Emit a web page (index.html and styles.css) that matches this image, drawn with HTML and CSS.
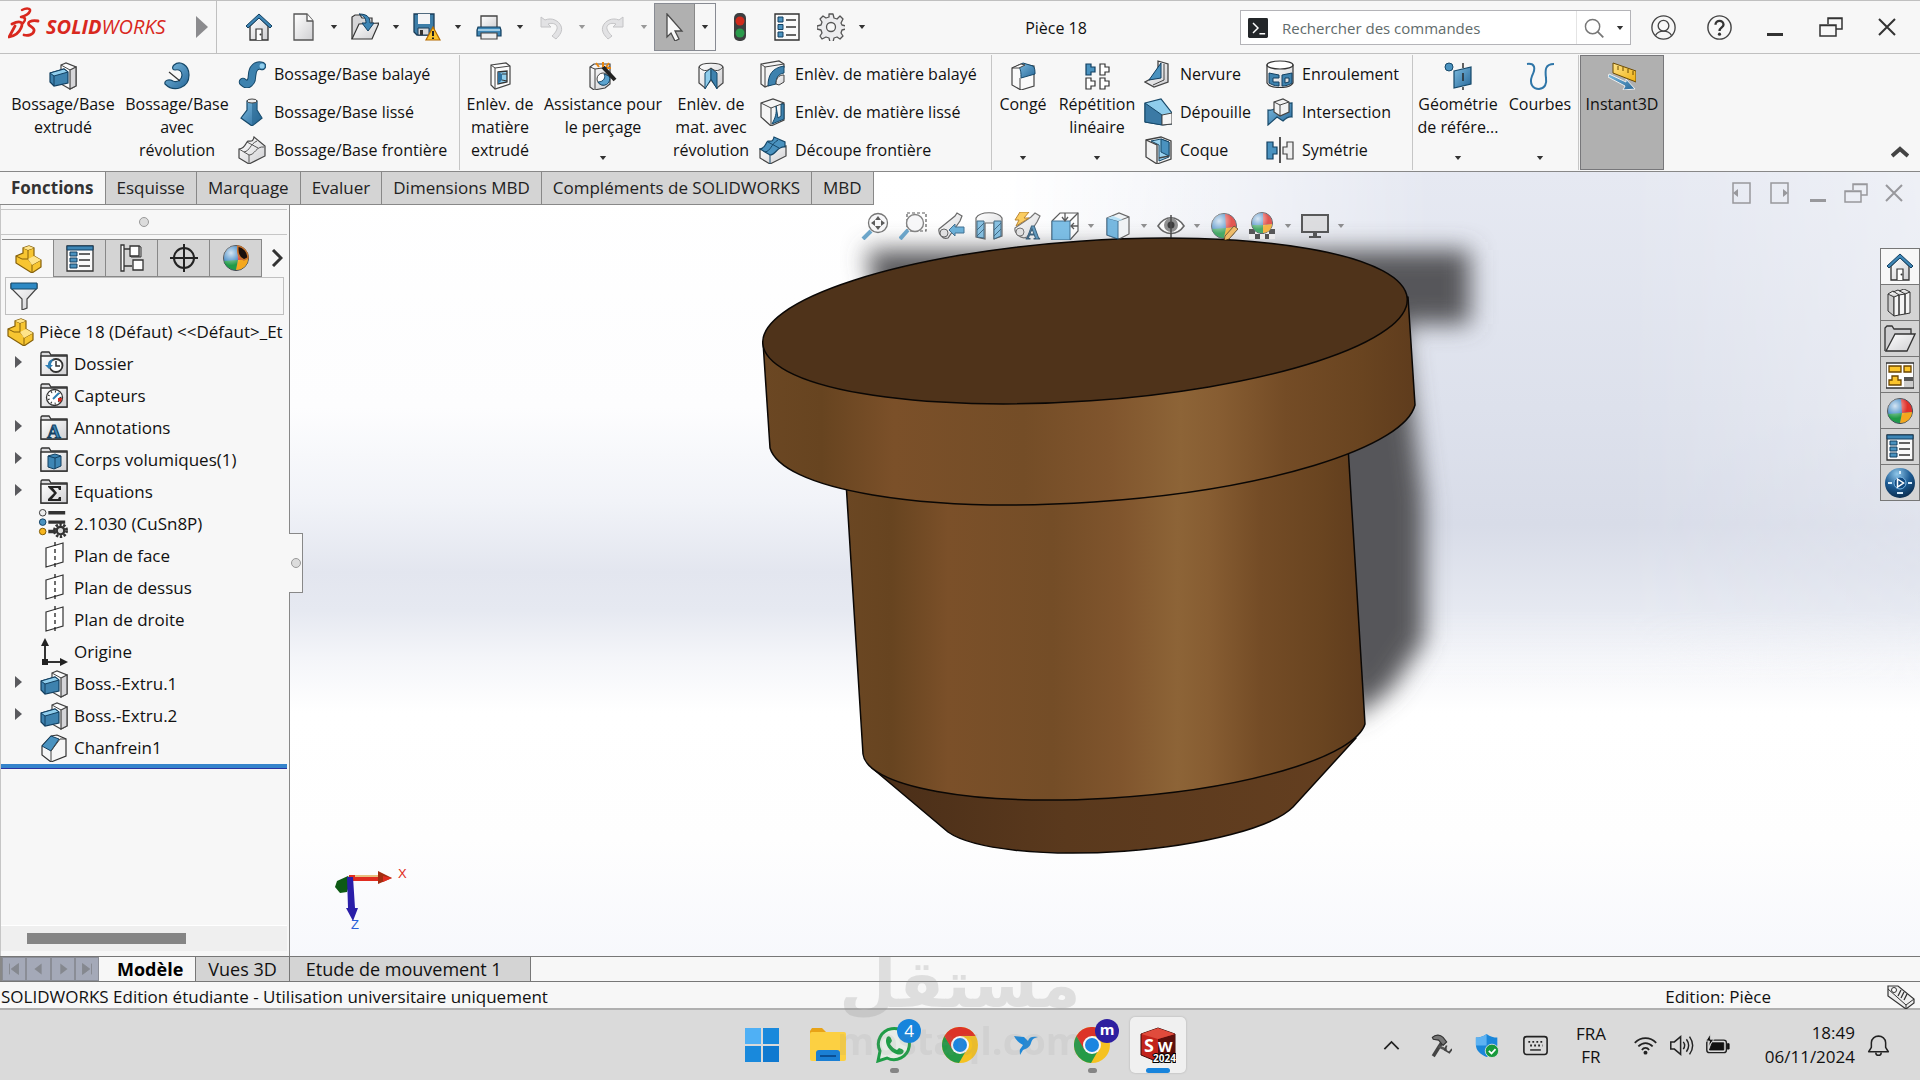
FILE: index.html
```html
<!DOCTYPE html>
<html lang="fr">
<head>
    <meta charset="UTF-8">
    <meta name="viewport" content="width=device-width, initial-scale=1.0">
    <title>SOLIDWORKS - Pièce 18</title>
    <link rel="stylesheet" href="styles.css">
</head>
<body>
    <!-- Icon sprite -->
    <svg class="sprite" aria-hidden="true">
        <defs>
            <linearGradient id="gBlue" x1="0" y1="0" x2="1" y2="1"><stop offset="0" stop-color="#7dbce0"/><stop offset="1" stop-color="#27689a"/></linearGradient>
            <linearGradient id="gGray" x1="0" y1="0" x2="1" y2="1"><stop offset="0" stop-color="#fff"/><stop offset="1" stop-color="#cfcfd2"/></linearGradient>
            <linearGradient id="gGold" x1="0" y1="0" x2="1" y2="1"><stop offset="0" stop-color="#ffe48a"/><stop offset="1" stop-color="#f0b010"/></linearGradient>
            <radialGradient id="gNavy" cx=".4" cy=".2" r=".9"><stop offset="0" stop-color="#8fc7ea"/><stop offset=".5" stop-color="#1c5a92"/><stop offset="1" stop-color="#08233f"/></radialGradient>
            <radialGradient id="gShine" cx=".3" cy=".3" r=".5"><stop offset="0" stop-color="#fff" stop-opacity=".8"/><stop offset="1" stop-color="#fff" stop-opacity="0"/></radialGradient>
        </defs>
        <symbol id="caret" viewBox="0 0 8 5"><path d="M0 0h8L4 5z" fill="currentColor"/></symbol>
        <symbol id="ds" viewBox="0 0 32 32"><g fill="none" stroke="#d9281e" stroke-linecap="round" stroke-linejoin="round"><path d="M14 3c4-2 9-2 8 1-1 3-5 5-9 6 5 0 5 3 2 6" stroke-width="2.500"/><path d="M4 17c8-4 12-2 9 4-2 5-7 8-12 9l6-11" stroke-width="2.800"/><path d="M30 14c-7-1-11 1-9 4 2 2 6 3 5 6-1 4-6 5-10 4" stroke-width="2.800"/></g></symbol>
        <symbol id="home" viewBox="0 0 28 28"><path d="M5 13v14h18V13l-9-9z" fill="url(#gGray)" stroke="#333" stroke-width="1.3"/><path d="M14 1L1 13l2 2L14 5l11 10 2-2z" fill="#3e86b5" stroke="#123f60"/><path d="M11 27V16h6v11" fill="#fff" stroke="#333" stroke-width="1.2"/><circle cx="15.500" cy="21.500" r="1" fill="#333"/></symbol>
        <symbol id="doc" viewBox="0 0 28 28"><path d="M5 1h13l6 7v19H5z" fill="url(#gGray)" stroke="#555" stroke-width="1.3"/><path d="M18 1v7h6" fill="#fff" stroke="#555" stroke-width="1.3"/></symbol>
        <symbol id="open" viewBox="0 0 28 28"><path d="M1 26V4l3-2h5l2 3h10v6" fill="#d6d6d8" stroke="#333" stroke-width="1.2"/><path d="M1 26L8 11l20-1-7 16z" fill="url(#gGray)" stroke="#333" stroke-width="1.2"/><path d="M8 1c8 0 11 3 11 9h4l-6 8-6-8h4c0-5-2-7-7-9z" fill="#3e86b5" stroke="#123f60"/></symbol>
        <symbol id="save" viewBox="0 0 28 28"><path d="M1 1h20v21H4l-3-3z" fill="#3e7ea8" stroke="#1a3d58" stroke-width="1.3"/><path d="M5 1h12v10H5z" fill="#f4f4f6"/><path d="M5 15h11v7H5z" fill="#d8d8da" stroke="#1a3d58"/><path d="M7 17h3v5H7z" fill="#333"/><path d="M20 14l7 13H13z" fill="#fcc52c" stroke="#b56a00" stroke-width="1.2"/><path d="M20 18v5M20 24.500v1.500" stroke="#222" stroke-width="2"/></symbol>
        <symbol id="print" viewBox="0 0 28 28"><path d="M6 3h16v13H6z" fill="url(#gGray)" stroke="#444" stroke-width="1.3"/><path d="M3 14h22l1 3v6H2v-6z" fill="#3e86b5" stroke="#143f5e" stroke-width="1.2"/><path d="M6 20h16v6H6z" fill="#eee" stroke="#444" stroke-width="1.2"/><path d="M3 17h22" stroke="#bfe0f3" stroke-width="1.500"/></symbol>
        <symbol id="undo" viewBox="0 0 28 28"><path d="M4 4v10h10l-3-3c6-2 10 1 9 5-1 3-3 5-5 7l4 3c4-4 7-8 5-13-2-5-9-9-16-6z" fill="#e2e2e4" stroke="#c4c4c6"/></symbol>
        <symbol id="cursor" viewBox="0 0 28 28"><path d="M6 1l15 17-7 0 4 8-4 2-4-8-4 4z" fill="#f8f8f8" stroke="#4a4a4a" stroke-width="1.300"/></symbol>
        <symbol id="light" viewBox="0 0 28 28"><rect x="8" y="0" width="12" height="28" rx="5" fill="#3d3f40"/><circle cx="14" cy="8" r="4.500" fill="#d02a1c"/><circle cx="14" cy="20" r="4.500" fill="#2a9a4c"/></symbol>
        <symbol id="list" viewBox="0 0 28 28"><path d="M2 1h24v26H2z" fill="#fafafa" stroke="#333" stroke-width="1.400"/><path d="M5 4h5v5H5zM5 11.500h5v5H5zM5 19h5v5H5z" fill="#4a92bf" stroke="#123f60"/><path d="M13 7h10M13 14h10M13 22h10" stroke="#333" stroke-width="1.400"/></symbol>
        <symbol id="gear" viewBox="0 0 28 28"><path d="M12 1h4l1 4 3 1 3-3 3 3-2 4 1 2 4 1v3l-4 1-1 3 2 3-3 3-3-2-3 1-1 4h-3l-1-4-3-1-4 2-2-3 2-3-1-3-4-1v-3l4-1 1-3-2-3 3-3 3 2 3-1z" fill="#ececee" stroke="#555" stroke-width="1.300" stroke-linejoin="round"/><circle cx="14" cy="14" r="4.500" fill="#f7f7f7" stroke="#555" stroke-width="1.300"/></symbol>
        <symbol id="prompt" viewBox="0 0 28 28"><rect x="0" y="0" width="28" height="28" rx="2" fill="#232629"/><path d="M7 7l7 7-7 7M16 22h8" fill="none" stroke="#fff" stroke-width="2"/></symbol>
        <symbol id="lens" viewBox="0 0 28 28"><circle cx="12" cy="12" r="10" fill="none" stroke="#777" stroke-width="2"/><path d="M19 19l8 8" stroke="#777" stroke-width="2.500"/></symbol>
        <symbol id="user" viewBox="0 0 28 28"><g fill="none" stroke="#444" stroke-width="1.500"><circle cx="14" cy="14" r="13"/><circle cx="14" cy="12" r="6"/><path d="M5 23c2-4 5-5 9-5s7 1 9 5"/></g></symbol>
        <symbol id="help" viewBox="0 0 28 28"><circle cx="14" cy="14" r="13" fill="none" stroke="#444" stroke-width="1.600"/><path d="M9.500 11c0-6 9-6 9 0 0 3-4.500 3-4.500 7" fill="none" stroke="#333" stroke-width="2.600"/><circle cx="14" cy="21.500" r="1.800" fill="#333"/></symbol>
        <symbol id="min" viewBox="0 0 28 28"><path d="M6 20h16v3H6z" fill="currentColor"/></symbol>
        <symbol id="restore" viewBox="0 0 28 28"><path d="M11 11V5h14v11h-6M11 5.500h14" fill="none" stroke="currentColor" stroke-width="1.500"/><path d="M3 12h16v11H3zM3 12.500h16" fill="none" stroke="currentColor" stroke-width="1.500"/></symbol>
        <symbol id="close" viewBox="0 0 28 28"><path d="M6 6l16 16M22 6L6 22" stroke="currentColor" stroke-width="2"/></symbol>
        <symbol id="pane-left" viewBox="0 0 28 28"><path d="M5 4h17v20H5z" fill="none" stroke="currentColor" stroke-width="1.500"/><path d="M5 14l5-4v8z" fill="currentColor"/></symbol>
        <symbol id="pane-right" viewBox="0 0 28 28"><path d="M5 4h17v20H5z" fill="none" stroke="currentColor" stroke-width="1.500"/><path d="M22 14l-5-4v8z" fill="currentColor"/></symbol>

        <symbol id="boss" viewBox="0 0 28 28"><path d="M12 3l5-2 10 4v19l-6 3-9-5z" fill="#fbfbfb" stroke="#444" stroke-width="1.200"/><path d="M21 8l6-3v19l-6 3z" fill="#d6d6d9" stroke="#444" stroke-width="1.200"/><path d="M12 3l9 5" stroke="#444"/><path d="M1 11l14-4 4 3v11L5 24l-4-4z" fill="#3e82ae" stroke="#123f60" stroke-width="1.200"/><path d="M1 11l14-4 4 3-14 4z" fill="#8fcdec" stroke="#123f60"/><path d="M5 14v10" stroke="#123f60"/></symbol>
        <symbol id="revolve" viewBox="0 0 28 28"><path d="M11 3c6-5 15 0 15 10 0 13-15 18-24 9-1-4 4-5 8-3 5 2 9-2 9-6 0-4-3-6-7-5-3 0-3-3-1-5z" fill="url(#gBlue)" stroke="#164869" stroke-width="1.200"/><path d="M6 10l11 9" stroke="#333" stroke-width="1.200"/></symbol>
        <symbol id="sweep" viewBox="0 0 28 28"><path d="M5 22c5 5 9 0 9-6 0-8 5-12 10-10" fill="none" stroke="#164869" stroke-width="8.500" stroke-linecap="round"/><path d="M5 22c5 5 9 0 9-6 0-8 5-12 10-10" fill="none" stroke="#3e82ae" stroke-width="6.500" stroke-linecap="round"/><circle cx="24" cy="6" r="2.500" fill="#8fcdec"/></symbol>
        <symbol id="loft" viewBox="0 0 28 28"><path d="M9 3v9L3 20l11 8 10-8-5-8V3z" fill="url(#gBlue)" stroke="#164869" stroke-width="1.200"/><path d="M14 5v23l10-8-5-8V3z" fill="#276590" fill-opacity=".6"/><ellipse cx="14" cy="3" rx="5" ry="2" fill="#eee" stroke="#444"/></symbol>
        <symbol id="boundary" viewBox="0 0 28 28"><path d="M1 13v9l10 6 16-8V10L16 1c-1 5-3 4-6 4-3 2-2 7-9 8z" fill="url(#gGray)" stroke="#444" stroke-width="1.200"/><path d="M1 13l10 6c6 0 7-9 15-8M11 19v9M6 16c6-1 6-8 13-11M9 6l11 6" fill="none" stroke="#555"/></symbol>
        <symbol id="cut" viewBox="0 0 28 28"><path d="M5 3l15-2 4 3v18L9 27l-4-4z" fill="#fbfbfb" stroke="#444" stroke-width="1.200"/><path d="M5 3l4 3v21M9 6l15-2" fill="none" stroke="#444"/><path d="M12 10l9-1v11l-9 2z" fill="#8fcdec" stroke="#333" stroke-width="1.300"/><path d="M12 10l4 2v6l-4 4z" fill="#2f72a0"/><path d="M16 12h5M16 18l5 1" stroke="#333"/></symbol>
        <symbol id="wizard" viewBox="0 0 28 28"><path d="M1 5l4-3h16v20l-5 4-11 2-4-3z" fill="url(#gGray)" stroke="#444" stroke-width="1.200"/><path d="M1 5l5 2v20M6 7l15-2" fill="none" stroke="#444"/><circle cx="14" cy="17" r="6" fill="#fff" stroke="#444"/><path d="M9 20a6 6 0 0 0 11-6l-5-2c2 3 0 8-6 8z" fill="#5ba3cf" stroke="#164869"/><path d="M14 5l12 13" stroke="#222" stroke-width="4"/><path d="M7 1l3 4M14 0v5M20 1l-3 4M22 6h-4" stroke="#e9860f" stroke-width="2"/></symbol>
        <symbol id="cutrev" viewBox="0 0 28 28"><path d="M2 5c2-5 22-5 24 0v16l-6 5-6-8-6 8-6-5z" fill="url(#gGray)" stroke="#444" stroke-width="1.200"/><path d="M8 11l6-5v11l-6 10z" fill="#8fcdec" stroke="#164869"/><path d="M14 6l6 5v16l-6-10z" fill="#3e82ae" stroke="#164869"/><path d="M2 5c3 4 8 5 12 1 4 4 9 3 12-1" fill="none" stroke="#444"/></symbol>
        <symbol id="cutsweep" viewBox="0 0 28 28"><path d="M2 4l18-3 5 3v3L13 24l-7 3-4-3z" fill="#f4f4f4" stroke="#444" stroke-width="1.200"/><path d="M2 4l4 3v20M6 7l19-3" fill="none" stroke="#444"/><path d="M9 26C9 15 13 8 25 6v7c-6 1-8 5-8 11z" fill="#3e82ae" stroke="#164869"/><path d="M17 24c0-5 2-9 8-9v7l-5 3z" fill="url(#gGray)" stroke="#444"/></symbol>
        <symbol id="cutloft" viewBox="0 0 28 28"><path d="M2 5l12-4 11 4v17l-13 6-10-9z" fill="#f5f5f5" stroke="#444" stroke-width="1.200"/><path d="M2 5l10 5v18M12 10l13-5" fill="none" stroke="#444"/><path d="M17 8c1 8-1 12-4 18l12-5V6h-3v12l-3 2z" fill="#3e82ae" stroke="#164869"/></symbol>
        <symbol id="cutbound" viewBox="0 0 28 28"><path d="M1 13v9l10 6 16-8V10z" fill="url(#gGray)" stroke="#444" stroke-width="1.200"/><path d="M1 13C7 12 6 7 9 5c3 0 5 1 6-4l11 5v5c-8-1-9 8-15 8z" fill="#4a92bf" stroke="#164869" stroke-width="1.200"/><path d="M6 16c6-1 6-8 13-12M9 6l11 6M11 19v9" fill="none" stroke="#164869"/></symbol>
        <symbol id="fillet" viewBox="0 0 28 28"><path d="M3 6l9-4 13 2v20l-13 4-9-5z" fill="#fafafa" stroke="#444" stroke-width="1.200"/><path d="M11 16v12" fill="none" stroke="#444"/><path d="M9 4l5-3 10 3c2 2 2 5 2 8l-14 4c0-5 0-9-3-12z" fill="url(#gBlue)" stroke="#164869"/><path d="M3 6l9-4 4 1-6 3z" fill="#fff" stroke="#444"/></symbol>
        <symbol id="pattern" viewBox="0 0 28 28"><path d="M3 2h5v3h4v5H8v3H3z" fill="#4a92bf" stroke="#123f60" stroke-width="1.200"/><path d="M17 2h5v3h4v5h-4v3h-5zM3 16h5v3h4v5H8v3H3zM17 16h5v3h4v5h-4v3h-5z" fill="#fff" stroke="#333" stroke-width="1.200"/></symbol>
        <symbol id="rib" viewBox="0 0 28 28"><path d="M14 1l10 3v18L10 27l-9-5 13-7z" fill="url(#gGray)" stroke="#444" stroke-width="1.300"/><path d="M20 4v16l-11 5" fill="none" stroke="#444"/><path d="M17 3v15L5 20z" fill="#4a92bf" stroke="#123f60"/></symbol>
        <symbol id="draft" viewBox="0 0 28 28"><path d="M1 5l16-4 11 14v11l-9 1L1 24z" fill="#8fcdec" stroke="#164869" stroke-width="1.200"/><path d="M1 5l17 12v10L1 24z" fill="#3b7aa5" stroke="#164869"/><path d="M18 17l10-2v11l-10 1z" fill="#f5f5f5" stroke="#444"/></symbol>
        <symbol id="shell" viewBox="0 0 28 28"><path d="M2 4l15-3 10 4v18l-14 5L2 21z" fill="#f2f2f2" stroke="#444" stroke-width="1.300"/><path d="M7 5l10-2 8 3v15l-10 4V9z" fill="#9ad3f0" stroke="#164869"/><path d="M17 3v13l8 4V6z" fill="#4a92bf" stroke="#164869"/><path d="M2 4l11 5v19M15 22l10-2" fill="none" stroke="#444" stroke-width="1.300"/></symbol>
        <symbol id="wrap" viewBox="0 0 28 28"><path d="M1 5v18c3 6 23 6 26 0V5z" fill="url(#gGray)" stroke="#333" stroke-width="1.200"/><ellipse cx="14" cy="5" rx="13" ry="4" fill="#fff" stroke="#333" stroke-width="1.200"/><path d="M3 13l10 2v3H7v4h6v4C8 26 5 24 3 23zM16 15l10-2v10c-3 2-6 3-10 3zM19 18v5l4-1v-4z" fill="#3e82ae" stroke="#123f60" fill-rule="evenodd"/></symbol>
        <symbol id="intersect" viewBox="0 0 28 28"><path d="M2 12c5 1 10-3 12-6l12-1v14c-4-1-7 2-9 4l-6-4-9 8z" fill="url(#gBlue)" stroke="#164869" stroke-width="1.200"/><path d="M8 4l9-3 6 3v10l-9 4-6-4z" fill="#f2f2f2" stroke="#444" stroke-width="1.200"/><path d="M8 4l6 3v11M14 7l9-3" fill="none" stroke="#444"/></symbol>
        <symbol id="mirror" viewBox="0 0 28 28"><path d="M1 6h6v5h4v7H7v5H1z" fill="#4a92bf" stroke="#123f60" stroke-width="1.200"/><path d="M27 6h-6v5h-4v7h4v5h6z" fill="#eee" stroke="#444" stroke-width="1.200"/><path d="M14 1v26" stroke="#111" stroke-width="1.400"/></symbol>
        <symbol id="refgeo" viewBox="0 0 28 28"><circle cx="5" cy="5" r="4" fill="#4a92bf" stroke="#164869"/><path d="M10 9l17-4v17l-17 4z" fill="url(#gBlue)" stroke="#164869" stroke-width="1.200"/><path d="M19 1v5M19 11v8M19 25v3" stroke="#222" stroke-width="1.400"/></symbol>
        <symbol id="curves" viewBox="0 0 28 28"><path d="M1 2c8-1 9 4 5 12-3 8 1 13 7 13 6-1 8-5 7-11-1-8-1-14 8-14" fill="none" stroke="#2f76a8" stroke-width="2"/></symbol>
        <symbol id="instant" viewBox="0 0 28 28"><path d="M5 1l23 8v11L5 11z" fill="url(#gGold)" stroke="#6b4a00"/><path d="M10 4v4M15 5v4M20 7v4M25 9v4" stroke="#6b4a00"/><path d="M1 12l17 8v-3l9 10-12 1 2-4L0 15z" fill="url(#gBlue)" stroke="#eee"/></symbol>

        <symbol id="zoomfit" viewBox="0 0 28 28"><circle cx="17" cy="11" r="9.500" fill="#f6f6f8" stroke="#555" stroke-width="1.300"/><path d="M10 19l-8 8" stroke="#4a92bf" stroke-width="4"/><path d="M17 4l3 4h-6zM17 18l3-4h-6zM10 11l4-3v6zM24 11l-4-3v6z" fill="#333"/></symbol>
        <symbol id="zoomarea" viewBox="0 0 28 28"><path d="M8 1h19v18H8z" fill="none" stroke="#333" stroke-width="1.200" stroke-dasharray="3 2"/><circle cx="16" cy="11" r="8.500" fill="#f6f6f8" stroke="#666" stroke-width="1.400"/><path d="M9 18l-8 9" stroke="#4a92bf" stroke-width="4"/></symbol>
        <symbol id="prev" viewBox="0 0 28 28"><path d="M2 17L18 4l2-3 5 3-2 5L11 26c-5 2-10-4-9-9z" fill="url(#gGray)" stroke="#444" stroke-width="1.200"/><circle cx="7" cy="21" r="4" fill="#ddd" stroke="#444"/><path d="M12 18l6-6v3h9v6h-9v3z" fill="#4a9fd0" stroke="#17507a"/></symbol>
        <symbol id="section" viewBox="0 0 28 28"><path d="M1 6c4-7 22-7 26 0v18l-8 3V11H10v16l-9-2z" fill="url(#gGray)" stroke="#444" stroke-width="1.200"/><path d="M2 9h7v17l-7-1zM19 9h7v15l-7 3z" fill="#6bb2db" stroke="#164869"/><path d="M2 18l7-7M2 24l7-7M19 18l7-7M19 24l7-7" stroke="#164869"/></symbol>
        <symbol id="telescope" viewBox="0 0 28 28"><path d="M2 16L18 5l4-4 5 3-3 6-10 15c-6 3-13-4-12-9z" fill="url(#gGray)" stroke="#555" stroke-width="1.200"/><circle cx="7" cy="20" r="4" fill="#ddd" stroke="#555"/><path d="M7 0h9l-5 6h5L3 14l3-6H2z" fill="#fbc23a" stroke="#a86700"/></symbol>
        <symbol id="orient" viewBox="0 0 28 28"><path d="M1 9l8-8h18v18l-8 9H1z" fill="#fff" fill-opacity=".7" stroke="#333" stroke-width="1.200"/><path d="M1 9h18v19H1z" fill="#5fb0e0" stroke="#17507a"/><path d="M19 9l8-8M14 1v7M11 5l3 4 3-4M27 14h-6M23 11l-3 3 3 3" fill="none" stroke="#333" stroke-width="1.300"/></symbol>
        <symbol id="display" viewBox="0 0 28 28"><path d="M3 6l12-5 10 4v17l-10 5-12-4z" fill="#eef2f5" stroke="#444" stroke-width="1.200"/><path d="M3 6l11 3v18L3 23z" fill="#58a9da" stroke="#17507a"/><path d="M14 9l11-4" stroke="#444"/><path d="M3 6l6-2 10 4-5 1z" fill="#a9dcf5"/></symbol>
        <symbol id="eye" viewBox="0 0 28 28"><path d="M1 14c7-11 19-11 26 0-7 10-19 10-26 0z" fill="#fff" stroke="#444" stroke-width="1.600"/><circle cx="14" cy="13" r="7" fill="#777"/><circle cx="14" cy="13" r="3.500" fill="#111"/><path d="M14 3v23" stroke="#222" stroke-width="1.500"/></symbol>
        <symbol id="ball" viewBox="0 0 28 28"><circle cx="14" cy="14" r="12.500" fill="#2b7cc0" stroke="#444"/><path d="M15 2a12 12 0 0 1 11 13l-10 1z" fill="#e0312a"/><path d="M2 17l14-1-2 10A12 12 0 0 1 2 17z" fill="#219a48"/><path d="M16 16l10-1c0 6-5 11-12 11z" fill="#f5a81d"/><circle cx="14" cy="14" r="12.500" fill="url(#gShine)"/></symbol>
        <symbol id="ball-dark" viewBox="0 0 28 28"><use href="#ball"/><path d="M16 2c6 1 10 6 10 12l-4 2c-5-2-7-7-6-14z" fill="#1a0f0c" stroke="#c8742c" stroke-width="1.500"/></symbol>
        <symbol id="appearance" viewBox="0 0 28 28"><use href="#ball"/><path d="M24 14l4 3-9 10-5 2 1-5z" fill="#f0b14a" stroke="#553a10"/></symbol>
        <symbol id="scene-ball" viewBox="0 0 28 28"><path d="M1 12h26v15H1z" fill="#333"/><path d="M1 12h6v5H1zM21 12h6v5h-6zM7 17h5v5H7zM16 17h5v5h-5zM1 22h6v5H1zM12 22h5v5h-5zM21 22h6v5h-6z" fill="#eee"/><circle cx="14" cy="11" r="10.500" fill="#2b7cc0" stroke="#444"/><path d="M15 1a10 10 0 0 1 9 11l-9 1z" fill="#e0312a"/><path d="M4 13l11 0v8A10 10 0 0 1 4 13z" fill="#219a48"/><path d="M15 13l9-1c0 5-4 9-9 9z" fill="#f5a81d"/><circle cx="14" cy="11" r="10.500" fill="url(#gShine)"/></symbol>
        <symbol id="monitor" viewBox="0 0 28 28"><path d="M1 3h26v17H1z" fill="#d9d9db" stroke="#333" stroke-width="2"/><path d="M12 20h4v4h4v2H8v-2h4z" fill="#333"/></symbol>

        <symbol id="part" viewBox="0 0 28 28"><path d="M2 11l7-3V3l6-2 5 2v8l7 4v7l-9 6L2 18z" fill="#f7c531" stroke="#85600a" stroke-width="1.200"/><path d="M9 3l5 2 6-2M14 5v9l4 5v9M2 11l6 3 6 0M18 20l9-5" fill="none" stroke="#85600a"/><path d="M9 3l6-2 5 2-6 2zM14 14l6-3 7 4-9 5z" fill="#ffe48a"/></symbol>
        <symbol id="props" viewBox="0 0 28 28"><path d="M1 2h26v25H1z" fill="#fafafa" stroke="#333" stroke-width="1.300"/><path d="M1 2h26v4H1z" fill="#3e86b5" stroke="#123f60"/><path d="M4 8h7v4H4zM4 14h7v4H4zM4 20h7v4H4z" fill="#4a92bf" stroke="#123f60"/><path d="M13 10h11M13 16h11M13 22h11" stroke="#333" stroke-width="1.400"/></symbol>
        <symbol id="config" viewBox="0 0 28 28"><path d="M3 1h3v26H3zM6 5h6M6 22h8" fill="#fff" stroke="#333" stroke-width="1.300"/><path d="M12 2h9v10h-9zM15 16h10v10H15z" fill="#fff" stroke="#333" stroke-width="1.300"/><path d="M21 2l2 1v10h-10l-1-1" fill="none" stroke="#333"/></symbol>
        <symbol id="target" viewBox="0 0 28 28"><circle cx="14" cy="14" r="10" fill="none" stroke="#222" stroke-width="2"/><path d="M14 0v28M0 14h28" stroke="#222" stroke-width="2"/></symbol>
        <symbol id="funnel" viewBox="0 0 28 28"><path d="M1 2h26v4L17 17v9l-5 2V17L1 6z" fill="url(#gGray)" stroke="#444" stroke-width="1.200"/><path d="M1 1h26v6H1z" fill="#2d89c4" stroke="#164869"/></symbol>
        <symbol id="folder" viewBox="0 0 28 28"><path d="M1 25V3l1-1h7l2 3h16v20z" fill="#dcdcde" stroke="#333" stroke-width="1.300"/><path d="M1 6h26v19H1z" fill="url(#gGray)" stroke="#333" stroke-width="1.300"/></symbol>
        <symbol id="t-history" viewBox="0 0 28 28"><use href="#folder"/><circle cx="16" cy="15.500" r="6.500" fill="#fff" stroke="#333" stroke-width="1.800"/><path d="M16 11v5h4" fill="none" stroke="#333" stroke-width="1.500"/><path d="M14 9c-5 1-6 3-6 6H5l4 4 4-4h-2c0-2 1-4 3-6z" fill="#2f7fb4"/></symbol>
        <symbol id="t-sensor" viewBox="0 0 28 28"><use href="#folder"/><circle cx="14.500" cy="15.500" r="8" fill="#fff" stroke="#333" stroke-width="1.300"/><circle cx="14.500" cy="15.500" r="6" fill="none" stroke="#333" stroke-width="2" stroke-dasharray="1 3"/><path d="M13 17l6-6" stroke="#2f7fb4" stroke-width="2"/><path d="M18 16h4l-1 4-3-1z" fill="#d8281e"/></symbol>
        <symbol id="t-body" viewBox="0 0 28 28"><use href="#folder"/><path d="M8 10l7-2 6 2v10l-7 3-6-2z" fill="#3e86b5" stroke="#123f60"/><path d="M8 10l7 2v11M15 12l6-2" fill="none" stroke="#123f60"/></symbol>
        <symbol id="t-eq" viewBox="0 0 28 28"><use href="#folder"/><path d="M8 8h13v4h-2l-1-2h-5l4 5-5 6h6l1-2h2v4H8v-2l6-6-6-6z" fill="#222"/></symbol>
        <symbol id="t-mat" viewBox="0 0 32 32"><path d="M11 4h18M11 14h18M11 24h8" stroke="#333" stroke-width="3.500"/><circle cx="5" cy="4" r="3.500" fill="#eee" stroke="#333"/><circle cx="5" cy="14" r="3.500" fill="#4a92bf" stroke="#123f60"/><circle cx="5" cy="24" r="3.500" fill="#f7b51c" stroke="#7a5500"/><circle cx="24" cy="23" r="6.500" fill="none" stroke="#333" stroke-width="3" stroke-dasharray="2.500 1.600"/><circle cx="24" cy="23" r="4" fill="#ddd" stroke="#333" stroke-width="2.500"/></symbol>
        <symbol id="t-plane" viewBox="0 0 28 28"><path d="M6 6l17-5v19L6 25z" fill="#fff" stroke="#333" stroke-width="1.200"/><path d="M15 0v28" stroke="#222" stroke-width="1.300" stroke-dasharray="4 3"/></symbol>
        <symbol id="t-origin" viewBox="0 0 28 28"><path d="M5 7v18M5 24h17" stroke="#333" stroke-width="2"/><path d="M2 21h6v6H2z" fill="#222"/><path d="M5 0l4 8H1zM28 24l-8-4v8z" fill="#222"/></symbol>
        <symbol id="t-chamfer" viewBox="0 0 28 28"><path d="M2 12l9-10 6-1 9 4v17l-15 6-9-7z" fill="#f6f6f6" stroke="#333" stroke-width="1.200"/><path d="M2 12l9-10 8 3-8 12z" fill="#4a92bf" stroke="#123f60"/><path d="M11 17v11M11 17l9-12 6 0" fill="none" stroke="#444"/></symbol>

        <symbol id="books" viewBox="0 0 28 28"><path d="M2 5l6 3v19l-6-5z" fill="#ccc" stroke="#333"/><path d="M8 8l5-2v20l-5 1zM13 6l6-1v20l-6 1zM19 5l5-2v21l-5 1z" fill="#f4f4f4" stroke="#333"/><path d="M2 5l5-3 6 4M7 3l5-2 7 4M13 2l5-2 6 3" fill="#eee" stroke="#333"/></symbol>
        <symbol id="folder-open" viewBox="0 0 32 28"><path d="M1 26V3l2-2h5l2 3h17v6" fill="#cfcfd1" stroke="#333" stroke-width="1.300"/><path d="M2 26L11 9h20l-8 17z" fill="url(#gGray)" stroke="#333" stroke-width="1.300"/></symbol>
        <symbol id="palette" viewBox="0 0 28 28"><path d="M0 2h28v25H0z" fill="#fff" stroke="#333" stroke-width="1.300"/><path d="M3 5h12v6H3zM18 5h7v6h-7zM6 15h6v4h3v5H3v-5h3z" fill="#fcc52c" stroke="#6b4500" stroke-width="1.300"/><path d="M18 17h9v9h-9z" fill="#ccc"/><path d="M18 16h9v4h-9z" fill="#555"/></symbol>
        <symbol id="forum" viewBox="0 0 30 30"><circle cx="15" cy="15" r="15" fill="url(#gNavy)"/><circle cx="15" cy="15" r="6" fill="#124a80" stroke="#79b8e6"/><path d="M12.500 11l6 4-6 4z" fill="none" stroke="#fff" stroke-width="1.500"/><path d="M15 3v3M3 15h4M23 15h4M12 25h6" stroke="#d8ecfa" stroke-width="2"/></symbol>

        <symbol id="windows" viewBox="0 0 36 36"><path d="M1 1h16v16H1z" fill="#4fb0f5"/><path d="M19 1h16v16H19zM1 19h16v16H1z" fill="#1989dc"/><path d="M19 19h16v16H19z" fill="#0f79d0"/></symbol>
        <symbol id="explorer" viewBox="0 0 36 36"><path d="M0 4l2-3h10l4 4h18v8H0z" fill="#e8a317"/><rect y="5" width="36" height="29" rx="2" fill="#fcd042"/><path d="M6 34v-8q0-3 3-3h18q3 0 3 3v8z" fill="#1a7fd4"/><path d="M10 29h16" stroke="#0a4f94" stroke-width="2"/></symbol>
        <symbol id="whatsapp" viewBox="0 0 36 36"><path d="M2 34l2-10a15.500 15.500 0 1 1 7 7z" fill="#e6ece6" stroke="#1f9d47" stroke-width="3"/><path d="M11 10c3-2 4 1 5 4l-2 3c2 3 4 5 7 6l2-2c3 1 6 2 4 5-6 6-21-7-16-16z" fill="#1f9d47"/></symbol>
        <symbol id="chrome" viewBox="0 0 36 36"><circle cx="18" cy="18" r="18" fill="#f5c221"/><path d="M2.400 9A18 18 0 0 0 17 36l8-14H11z" fill="#249a46"/><path d="M2.400 9A18 18 0 0 1 33.600 9H18l-8 13z" fill="#dc3328"/><circle cx="18" cy="18" r="9" fill="#f6f6f6"/><circle cx="18" cy="18" r="7" fill="#1b85e0"/></symbol>
        <symbol id="bird" viewBox="0 0 24 20"><path d="M0 1l10 1 4 4c1-4 4-5 10-4-5 1-6 3-7 6-1 4-5 6-8 7l-3 5c0-3-1-5 1-7l2-3C5 8 2 5 0 1z" fill="#1e88d8"/></symbol>
        <symbol id="up" viewBox="0 0 28 28"><path d="M6 18l8-8 8 8" fill="none" stroke="#222" stroke-width="2"/></symbol>
        <symbol id="hammer" viewBox="0 0 28 28"><path d="M7 26L17 10" stroke="#444" stroke-width="4"/><path d="M6 5c4-4 9-3 12 0l4 5-4 4-5-6-6-1z" fill="#777" stroke="#333" stroke-width="1.300"/><path d="M13 15l9 4" stroke="#555" stroke-width="3"/><path d="M22 14l-2 5 5 3 3-4" fill="none" stroke="#444" stroke-width="2"/></symbol>
        <symbol id="shield" viewBox="0 0 28 28"><path d="M13 1c4 3 8 4 12 4v8c0 7-5 11-12 14C6 24 1 20 1 13V5c4 0 8-1 12-4z" fill="#1a86d9"/><path d="M13 1v13H1V5c4 0 8-1 12-4z" fill="#5db2f2"/><circle cx="19" cy="20" r="7.500" fill="#179a3c" stroke="#ddd"/><path d="M15.500 20l3 3 4.500-5" fill="none" stroke="#fff" stroke-width="2"/></symbol>
        <symbol id="keyboard" viewBox="0 0 28 28"><rect x="1" y="4" width="26" height="20" rx="3" fill="none" stroke="#222" stroke-width="1.800"/><path d="M6 10h16M8 14h14" stroke="#222" stroke-width="2" stroke-dasharray="2 2.500"/><path d="M8 19h12" stroke="#222" stroke-width="1.600"/></symbol>
        <symbol id="wifi" viewBox="0 0 28 28"><g fill="none" stroke="#222" stroke-width="2"><path d="M2 11c7-7 17-7 24 0M6 15c5-5 11-5 16 0M10 19c2-3 6-3 8 0"/></g><circle cx="14" cy="22" r="2.200" fill="#222"/></symbol>
        <symbol id="sound" viewBox="0 0 28 28"><path d="M2 10h4l7-6v20l-7-6H2z" fill="none" stroke="#222" stroke-width="1.700"/><path d="M16 10q3 4 0 8M19.500 7q5 7 0 14M23 4q7 10 0 20" fill="none" stroke="#222" stroke-width="1.600"/></symbol>
        <symbol id="battery" viewBox="0 0 28 28"><rect x="2" y="8" width="22" height="14" rx="3" fill="none" stroke="#222" stroke-width="1.600"/><path d="M5 19l3-8h13v8zM25 12h2v6h-2z" fill="#111" stroke="#111"/><path d="M6 1L1 9h4l-1 6 6-8H6z" fill="#111" stroke="#dadada"/></symbol>
        <symbol id="bell" viewBox="0 0 28 28"><path d="M3 21l3-5v-5c0-10 16-10 16 0v5l3 5zM11 22c0 4 6 4 6 0" fill="none" stroke="#222" stroke-width="1.700" stroke-linejoin="round"/></symbol>
        <symbol id="tag" viewBox="0 0 28 24"><path d="M1 1h10l16 13v4l-8 6L1 11z" fill="#eee" stroke="#333" stroke-width="1.200"/><path d="M19 20l8-6M19 20v4M1 4l18 16" stroke="#333"/><circle cx="7" cy="5" r="2.500" fill="#fff" stroke="#333"/><path d="M11 11l3-6M14 13l3-6M17 15l3-6" stroke="#333" stroke-width="1.300"/></symbol>
    </svg>

    <!-- Title bar -->
    <header class="titlebar">
        <div class="brand">
            <svg class="ds-logo"><use href="#ds"/></svg>
            <span class="brand-name"><b>SOLID</b>WORKS</span>
            <button class="menu-arrow" aria-label="Menu"></button>
        </div>
        <div class="quick">
            <button class="quick-home" aria-label="Accueil"><svg class="icon"><use href="#home"/></svg></button>
            <div class="split"><button aria-label="Nouveau"><svg class="icon"><use href="#doc"/></svg></button><button class="drop" aria-label="Plus"><svg class="caret"><use href="#caret"/></svg></button></div>
            <div class="split"><button aria-label="Ouvrir"><svg class="icon"><use href="#open"/></svg></button><button class="drop" aria-label="Plus"><svg class="caret"><use href="#caret"/></svg></button></div>
            <div class="split"><button aria-label="Enregistrer"><svg class="icon"><use href="#save"/></svg></button><button class="drop" aria-label="Plus"><svg class="caret"><use href="#caret"/></svg></button></div>
            <div class="split"><button aria-label="Imprimer"><svg class="icon"><use href="#print"/></svg></button><button class="drop" aria-label="Plus"><svg class="caret"><use href="#caret"/></svg></button></div>
            <div class="split off"><button aria-label="Annuler"><svg class="icon"><use href="#undo"/></svg></button><button class="drop" aria-label="Plus"><svg class="caret"><use href="#caret"/></svg></button></div>
            <div class="split off"><button aria-label="Rétablir"><svg class="icon flip"><use href="#undo"/></svg></button><button class="drop" aria-label="Plus"><svg class="caret"><use href="#caret"/></svg></button></div>
            <div class="split selected"><button aria-label="Sélectionner"><svg class="icon"><use href="#cursor"/></svg></button><button class="drop" aria-label="Plus"><svg class="caret"><use href="#caret"/></svg></button></div>
            <button class="quick-wide" aria-label="Reconstruire"><svg class="icon"><use href="#light"/></svg></button>
            <button class="quick-wide" aria-label="Propriétés"><svg class="icon"><use href="#list"/></svg></button>
            <div class="split"><button aria-label="Options"><svg class="icon"><use href="#gear"/></svg></button><button class="drop" aria-label="Plus"><svg class="caret"><use href="#caret"/></svg></button></div>
        </div>
        <h1 class="doc-title">Pièce 18</h1>
        <div class="search">
            <svg class="icon-sm"><use href="#prompt"/></svg>
            <input type="text" aria-label="Rechercher des commandes" placeholder="Rechercher des commandes">
            <button class="search-go" aria-label="Rechercher"><svg class="icon-sm"><use href="#lens"/></svg><svg class="caret"><use href="#caret"/></svg></button>
        </div>
        <div class="window-buttons">
            <button aria-label="Compte"><svg class="icon-md"><use href="#user"/></svg></button>
            <button aria-label="Aide"><svg class="icon-md"><use href="#help"/></svg></button>
            <button aria-label="Réduire"><svg class="icon"><use href="#min"/></svg></button>
            <button aria-label="Restaurer"><svg class="icon"><use href="#restore"/></svg></button>
            <button aria-label="Fermer"><svg class="icon"><use href="#close"/></svg></button>
        </div>
    </header>

    <!-- Ribbon -->
    <section class="ribbon">
        <div class="group group-boss">
            <button class="big"><svg class="icon"><use href="#boss"/></svg><span>Bossage/Base<br>extrudé</span></button>
            <button class="big"><svg class="icon"><use href="#revolve"/></svg><span>Bossage/Base<br>avec<br>révolution</span></button>
            <div class="stack">
                <button><svg class="icon"><use href="#sweep"/></svg>Bossage/Base balayé</button>
                <button><svg class="icon"><use href="#loft"/></svg>Bossage/Base lissé</button>
                <button><svg class="icon"><use href="#boundary"/></svg>Bossage/Base frontière</button>
            </div>
        </div>
        <div class="group group-cut">
            <button class="big big-80"><svg class="icon"><use href="#cut"/></svg><span>Enlèv. de<br>matière<br>extrudé</span></button>
            <button class="big big-126"><svg class="icon"><use href="#wizard"/></svg><span>Assistance pour<br>le perçage</span><svg class="caret"><use href="#caret"/></svg></button>
            <button class="big big-90"><svg class="icon"><use href="#cutrev"/></svg><span>Enlèv. de<br>mat. avec<br>révolution</span></button>
            <div class="stack stack-cut">
                <button><svg class="icon"><use href="#cutsweep"/></svg>Enlèv. de matière balayé</button>
                <button><svg class="icon"><use href="#cutloft"/></svg>Enlèv. de matière lissé</button>
                <button><svg class="icon"><use href="#cutbound"/></svg>Découpe frontière</button>
            </div>
        </div>
        <div class="group group-feat">
            <button class="big big-62"><svg class="icon"><use href="#fillet"/></svg><span>Congé</span><svg class="caret"><use href="#caret"/></svg></button>
            <button class="big big-86"><svg class="icon"><use href="#pattern"/></svg><span>Répétition<br>linéaire</span><svg class="caret"><use href="#caret"/></svg></button>
            <div class="stack stack-rib">
                <button><svg class="icon"><use href="#rib"/></svg>Nervure</button>
                <button><svg class="icon"><use href="#draft"/></svg>Dépouille</button>
                <button><svg class="icon"><use href="#shell"/></svg>Coque</button>
            </div>
            <div class="stack">
                <button><svg class="icon"><use href="#wrap"/></svg>Enroulement</button>
                <button><svg class="icon"><use href="#intersect"/></svg>Intersection</button>
                <button><svg class="icon"><use href="#mirror"/></svg>Symétrie</button>
            </div>
        </div>
        <div class="group group-ref">
            <button class="big big-90"><svg class="icon"><use href="#refgeo"/></svg><span>Géométrie<br>de référe...</span><svg class="caret"><use href="#caret"/></svg></button>
            <button class="big big-74"><svg class="icon"><use href="#curves"/></svg><span>Courbes</span><svg class="caret"><use href="#caret"/></svg></button>
        </div>
        <button class="big big-84 pressed"><svg class="icon"><use href="#instant"/></svg><span>Instant3D</span></button>
        <button class="collapse" aria-label="Réduire le ruban"><svg viewBox="0 0 18 12"><path d="M1 10l8-7 8 7" fill="none" stroke="#444" stroke-width="4"/></svg></button>
    </section>

    <main class="workspace">
        <nav class="command-tabs">
            <button class="active">Fonctions</button>
            <button>Esquisse</button>
            <button>Marquage</button>
            <button>Evaluer</button>
            <button>Dimensions MBD</button>
            <button>Compléments de SOLIDWORKS</button>
            <button>MBD</button>
        </nav>

        <!-- Feature manager -->
        <aside class="manager">
            <div class="grip"><span class="dot"></span></div>
            <div class="manager-tabs">
                <button class="active" aria-label="Arbre de création"><svg class="icon"><use href="#part"/></svg></button>
                <button aria-label="Propriétés"><svg class="icon"><use href="#props"/></svg></button>
                <button aria-label="Configurations"><svg class="icon"><use href="#config"/></svg></button>
                <button aria-label="DimXpert"><svg class="icon"><use href="#target"/></svg></button>
                <button aria-label="Affichage"><svg class="icon"><use href="#ball-dark"/></svg></button>
                <button class="more" aria-label="Suivant"><svg viewBox="0 0 12 18"><path d="M2 1l8 8-8 8" fill="none" stroke="#333" stroke-width="3"/></svg></button>
            </div>
            <label class="filter"><svg class="icon"><use href="#funnel"/></svg><input type="text" aria-label="Filtrer"></label>
            <ul class="tree">
                <li class="root"><svg class="icon"><use href="#part"/></svg>Pièce 18 (Défaut) &lt;&lt;Défaut&gt;_Et</li>
                <li class="parent"><svg class="icon"><use href="#t-history"/></svg>Dossier</li>
                <li><svg class="icon"><use href="#t-sensor"/></svg>Capteurs</li>
                <li class="parent"><svg class="icon" viewBox="0 0 28 28"><use href="#folder"/><text x="7" y="24" class="icon-letter">A</text></svg>Annotations</li>
                <li class="parent"><svg class="icon"><use href="#t-body"/></svg>Corps volumiques(1)</li>
                <li class="parent"><svg class="icon"><use href="#t-eq"/></svg>Equations</li>
                <li class="material"><svg class="icon-lg"><use href="#t-mat"/></svg>2.1030 (CuSn8P)</li>
                <li><svg class="icon"><use href="#t-plane"/></svg>Plan de face</li>
                <li><svg class="icon"><use href="#t-plane"/></svg>Plan de dessus</li>
                <li><svg class="icon"><use href="#t-plane"/></svg>Plan de droite</li>
                <li><svg class="icon"><use href="#t-origin"/></svg>Origine</li>
                <li class="parent"><svg class="icon"><use href="#boss"/></svg>Boss.-Extru.1</li>
                <li class="parent"><svg class="icon"><use href="#boss"/></svg>Boss.-Extru.2</li>
                <li><svg class="icon"><use href="#t-chamfer"/></svg>Chanfrein1</li>
            </ul>
            <div class="rollback"></div>
            <div class="scrollbar"><span class="thumb"></span></div>
        </aside>

        <!-- Graphics area -->
        <section class="viewport">
            <svg class="scene" viewBox="290 172 1630 784" preserveAspectRatio="xMidYMid slice" aria-label="Pièce 18">
                <defs>
                    <linearGradient id="band" x1="0" y1="0" x2="0" y2="1">
                        <stop offset="0" stop-color="#fff"/><stop offset=".3" stop-color="#fdfdfe"/><stop offset=".42" stop-color="#f1f3f8"/><stop offset=".51" stop-color="#e3e6ef"/><stop offset=".56" stop-color="#e6e9f1"/><stop offset=".62" stop-color="#f4f5f9"/><stop offset=".69" stop-color="#fff"/><stop offset=".85" stop-color="#fefefe"/><stop offset="1" stop-color="#f7f8fc"/>
                    </linearGradient>
                    <linearGradient id="sky" x1="0" y1="0" x2="0" y2="1">
                        <stop offset="0" stop-color="#e6e9f2"/><stop offset=".3" stop-color="#dde1ec"/><stop offset=".45" stop-color="#d8dce8"/><stop offset=".56" stop-color="#e6e9f1"/><stop offset=".66" stop-color="#fff" stop-opacity="0"/>
                    </linearGradient>
                    <linearGradient id="fade" x1="0" y1="0" x2="1" y2="0">
                        <stop offset=".44" stop-color="#000"/><stop offset=".7" stop-color="#fff"/><stop offset=".82" stop-color="#fff"/><stop offset="1" stop-color="#aaa"/>
                    </linearGradient>
                    <mask id="right"><rect x="290" y="172" width="1630" height="784" fill="url(#fade)"/></mask>
                    <linearGradient id="bronze" x1="0" y1="0" x2="1" y2="0">
                        <stop offset="0" stop-color="#6b4723"/><stop offset=".09" stop-color="#674420"/><stop offset=".2" stop-color="#7b5029"/><stop offset=".4" stop-color="#744d27"/><stop offset=".53" stop-color="#80552d"/><stop offset=".64" stop-color="#8d6437"/><stop offset=".7" stop-color="#875d32"/><stop offset=".8" stop-color="#744c26"/><stop offset=".92" stop-color="#694420"/><stop offset="1" stop-color="#5f3c1d"/>
                    </linearGradient>
                    <linearGradient id="bevel" x1="0" y1="0" x2="1" y2="0">
                        <stop offset="0" stop-color="#4a2e18"/><stop offset=".4" stop-color="#5a391d"/><stop offset="1" stop-color="#643f20"/>
                    </linearGradient>
                    <filter id="soft" x="-20%" y="-20%" width="140%" height="140%"><feGaussianBlur stdDeviation="12"/></filter>
                </defs>
                <rect x="290" y="172" width="1630" height="784" fill="url(#band)"/>
                <rect x="290" y="172" width="1630" height="784" fill="url(#sky)" mask="url(#right)"/>
                <path d="M866 250H1470V324H1402L1424 500V640L1390 690L1350 720L1300 500L900 400z" fill="#56565a" filter="url(#soft)"/>
                <g stroke="#0a0705" stroke-width="1.500" stroke-linejoin="round">
                    <path d="M872 768L948 832A180 44 -4 0 0 1293 807L1356 738z" fill="url(#bevel)"/>
                    <path d="M844 450L863 754A252 62 -4 0 0 1365 724L1347 430z" fill="url(#bronze)"/>
                    <path d="M763 342L770 448A324 81 -4 0 0 1415 405L1408 297z" fill="url(#bronze)"/>
                    <ellipse cx="1085" cy="321" rx="323" ry="80" transform="rotate(-4 1085 321)" fill="#4f331a"/>
                </g>
                <g class="triad">
                    <path d="M348 876l3 4-4 12-7 1-5-6 2-6z" fill="#0d5a14"/>
                    <path d="M349 875h30v6h-30z" fill="#e02c20"/><path d="M355 875h24v2h-24z" fill="#e8c080"/>
                    <path d="M378 871l14 7-14 6z" fill="#a32d10"/><path d="M383 876l9 2-9 4z" fill="#e02c20"/>
                    <path d="M347 877h6l2 31h3l-5 13-7-13h2z" fill="#2a1ea8"/>
                    <text x="398" y="878" class="axis axis-x">X</text>
                    <text x="351" y="929" class="axis axis-z">Z</text>
                </g>
            </svg>
            <div class="doc-buttons">
                <button aria-label="Panneau gauche"><svg class="icon"><use href="#pane-left"/></svg></button>
                <button aria-label="Panneau droit"><svg class="icon"><use href="#pane-right"/></svg></button>
                <button aria-label="Réduire"><svg class="icon"><use href="#min"/></svg></button>
                <button aria-label="Restaurer"><svg class="icon"><use href="#restore"/></svg></button>
                <button aria-label="Fermer"><svg class="icon"><use href="#close"/></svg></button>
            </div>
            <div class="hud">
                <button aria-label="Zoom au mieux"><svg class="icon"><use href="#zoomfit"/></svg></button>
                <button aria-label="Zoom fenêtre"><svg class="icon"><use href="#zoomarea"/></svg></button>
                <button aria-label="Vue précédente"><svg class="icon"><use href="#prev"/></svg></button>
                <button aria-label="Vue en coupe"><svg class="icon"><use href="#section"/></svg></button>
                <button aria-label="Annotations dynamiques"><svg class="icon" viewBox="0 0 28 28"><use href="#telescope"/><text x="13" y="27" class="icon-letter">A</text></svg></button>
                <button aria-label="Orientation"><svg class="icon"><use href="#orient"/></svg></button><svg class="caret"><use href="#caret"/></svg>
                <button aria-label="Style d'affichage"><svg class="icon"><use href="#display"/></svg></button><svg class="caret"><use href="#caret"/></svg>
                <button aria-label="Cacher/Montrer"><svg class="icon"><use href="#eye"/></svg></button><svg class="caret"><use href="#caret"/></svg>
                <button aria-label="Apparence"><svg class="icon"><use href="#appearance"/></svg></button>
                <button aria-label="Scène"><svg class="icon"><use href="#scene-ball"/></svg></button><svg class="caret"><use href="#caret"/></svg>
                <button aria-label="Paramètres de vue"><svg class="icon"><use href="#monitor"/></svg></button><svg class="caret"><use href="#caret"/></svg>
            </div>
            <div class="taskpane">
                <button class="active" aria-label="Ressources"><svg class="icon"><use href="#home"/></svg></button>
                <button aria-label="Bibliothèque"><svg class="icon"><use href="#books"/></svg></button>
                <button aria-label="Explorateur"><svg class="icon-lg"><use href="#folder-open"/></svg></button>
                <button aria-label="Palette de vues"><svg class="icon"><use href="#palette"/></svg></button>
                <button aria-label="Apparences"><svg class="icon"><use href="#ball"/></svg></button>
                <button aria-label="Propriétés"><svg class="icon"><use href="#props"/></svg></button>
                <button aria-label="Forum"><svg class="icon-lg"><use href="#forum"/></svg></button>
            </div>
            <button class="flyout" aria-label="Masquer le panneau"><span class="dot"></span></button>
        </section>
    </main>

    <!-- Model tabs and status bar -->
    <nav class="model-tabs">
        <div class="pager">
            <button aria-label="Premier"><svg viewBox="0 0 20 20"><path d="M5 4v12M15 4v12l-8-6z" stroke="#85888f" fill="#85888f"/></svg></button>
            <button aria-label="Précédent"><svg viewBox="0 0 20 20"><path d="M14 4v12l-8-6z" fill="#85888f"/></svg></button>
            <button aria-label="Suivant"><svg viewBox="0 0 20 20"><path d="M7 4v12l8-6z" fill="#85888f"/></svg></button>
            <button aria-label="Dernier"><svg viewBox="0 0 20 20"><path d="M15 4v12M5 4v12l8-6z" stroke="#85888f" fill="#85888f"/></svg></button>
        </div>
        <button class="tab active">Modèle</button>
        <button class="tab">Vues 3D</button>
        <button class="tab tab-study">Etude de mouvement 1</button>
    </nav>
    <footer class="status">
        <span>SOLIDWORKS Edition étudiante - Utilisation universitaire uniquement</span>
        <span class="status-mode">Edition: Pièce</span>
        <svg class="status-tag"><use href="#tag"/></svg>
    </footer>

    <!-- Windows taskbar -->
    <div class="taskbar">
        <div class="apps">
            <button aria-label="Démarrer"><svg class="app"><use href="#windows"/></svg></button>
            <button aria-label="Explorateur"><svg class="app"><use href="#explorer"/></svg></button>
            <button class="running" aria-label="WhatsApp"><svg class="app"><use href="#whatsapp"/></svg><span class="badge">4</span></button>
            <button aria-label="Chrome"><svg class="app"><use href="#chrome"/></svg></button>
            <button aria-label="Mail"><svg class="app app-bird"><use href="#bird"/></svg></button>
            <button class="running" aria-label="Chrome profil"><svg class="app"><use href="#chrome"/></svg><span class="badge badge-m">m</span></button>
            <button class="current" aria-label="SOLIDWORKS">
                <svg class="app" viewBox="0 0 36 36">
                    <path d="M1 7L18 1l17 6v21l-17 7L1 28z" fill="#c2231c" stroke="#3a0a08"/>
                    <path d="M18 12l17-5v21l-17 7z" fill="#5c0f0c"/>
                    <path d="M1 7l17-6 17 6-17 5z" fill="#e04b3c"/>
                    <text x="4" y="25" class="cube-letter">S</text>
                    <text x="18" y="25" class="cube-letter cube-letter-w">W</text>
                    <text x="13" y="35" class="cube-year">2024</text>
                </svg>
            </button>
        </div>
        <div class="tray">
            <button aria-label="Icônes cachées"><svg class="icon-md"><use href="#up"/></svg></button>
            <button aria-label="Outils"><svg class="icon-md"><use href="#hammer"/></svg></button>
            <button aria-label="Sécurité"><svg class="icon-md"><use href="#shield"/></svg></button>
            <button aria-label="Clavier"><svg class="icon-md"><use href="#keyboard"/></svg></button>
            <button class="lang">FRA<br>FR</button>
            <button class="net" aria-label="Réseau"><svg class="icon-md"><use href="#wifi"/></svg><svg class="icon-md"><use href="#sound"/></svg><svg class="icon-md"><use href="#battery"/></svg></button>
            <button class="clock">18:49<br>06/11/2024</button>
            <button class="bell" aria-label="Notifications"><svg class="icon-md"><use href="#bell"/></svg></button>
        </div>
    </div>

    <div class="watermark" aria-hidden="true">
        <span class="wm-ar" lang="ar">مستقل</span>
        <span class="wm-en">mostaql.com</span>
    </div>
</body>
</html>
```
FILE: styles.css
```css
* {
    box-sizing: border-box;
}

body {
    margin: 0;
    height: 100vh;
    display: flex;
    flex-direction: column;
    overflow: hidden;
    position: relative;
    background-color: #f7f7f7;
    color: #111;
    font-family: "Open Sans", "Noto Sans", sans-serif;
    font-size: 17px;
    line-height: 24px;
}

button {
    margin: 0;
    padding: 0;
    border: none;
    background: none;
    color: inherit;
    font: inherit;
    display: flex;
    align-items: center;
    justify-content: center;
}

input {
    border: none;
    outline: none;
    background: none;
    min-width: 0;
    flex: 1;
    font: inherit;
}

svg {
    display: block;
    flex: none;
}

.sprite {
    position: absolute;
    width: 0;
    height: 0;
}

/* Icon sizes */
.icon {
    width: 28px;
    height: 28px;
}

.icon-sm {
    width: 20px;
    height: 20px;
}

.icon-md {
    width: 25px;
    height: 25px;
}

.icon-lg {
    width: 32px;
    height: 30px;
}

.caret {
    width: 8px;
    height: 4px;
    color: #333;
}

.flip {
    transform: scaleX(-1);
}

.icon-letter {
    font: bold 19px "Liberation Serif", serif;
    fill: #3e86b5;
    stroke: #123f60;
    stroke-width: 1px;
}

/* Title bar */
.titlebar {
    flex: none;
    display: flex;
    height: 54px;
    border-top: 1px solid #c0c0c0;
    border-bottom: 1px solid #c0c0c0;
}

.brand {
    display: flex;
    align-items: center;
    width: 217px;
    padding-left: 8px;
    border-right: 1px solid #c0c0c0;
}

.ds-logo {
    width: 32px;
    height: 32px;
    margin: 0 6px 8px 0;
}

.brand-name {
    flex: 1;
    color: #d9281e;
    font-size: 20px;
    font-style: italic;
}

.menu-arrow {
    border: solid transparent;
    border-width: 11px 0 11px 12px;
    border-left-color: #8b8b8e;
    margin-right: 8px;
}

.quick {
    display: flex;
    align-items: center;
    padding-left: 18px;
}

.quick-home,
.quick-wide {
    width: 47px;
}

.split {
    display: flex;
    width: 62px;
    height: 48px;
}

.split button {
    flex: 1;
}

.split .drop {
    flex: none;
    width: 20px;
}

.off .caret {
    color: #999;
}

.selected {
    border: 1px solid #888b93;
}

.selected button:first-child {
    background-color: #b0b0b0;
    border-right: 1px solid #888;
}

.doc-title {
    flex: 1;
    margin: 0;
    text-align: center;
    font-size: 16px;
    font-weight: normal;
    line-height: 54px;
}

.search {
    display: flex;
    align-items: center;
    width: 391px;
    height: 35px;
    margin: 9px 4px 0 0;
    padding-left: 7px;
    gap: 12px;
    border: 1px solid #b4b4b8;
    background-color: #fff;
    font-size: 15px;
}

.search input::placeholder {
    color: #5f6b6b;
    opacity: 1;
}

.search-go {
    align-self: stretch;
    width: 54px;
    gap: 12px;
    border-left: 1px solid #e4e4e4;
}

.window-buttons {
    display: flex;
    padding-right: 5px;
    color: #333;
}

.window-buttons button {
    width: 56px;
}

/* Ribbon */
.ribbon {
    flex: none;
    display: flex;
    height: 118px;
    padding-top: 1px;
    border-bottom: 1px solid #888;
    font-size: 16px;
    line-height: 23px;
}

.group {
    display: flex;
    height: 115px;
    border-right: 1px solid #c6c6c6;
}

.group-boss {
    width: 460px;
    padding-left: 6px;
}

.group-cut {
    width: 532px;
}

.group-feat {
    width: 421px;
}

.group-ref {
    width: 166px;
    margin-right: 1px;
}

.big {
    flex: none;
    flex-direction: column;
    justify-content: flex-start;
    width: 114px;
    height: 115px;
    padding-top: 7px;
    gap: 3px;
    white-space: nowrap;
}

.big .caret {
    margin: auto 0 10px;
}

.big-62 {
    width: 62px;
}

.big-74 {
    width: 74px;
}

.big-80 {
    width: 80px;
}

.big-84 {
    width: 84px;
}

.big-86 {
    width: 86px;
}

.big-90 {
    width: 90px;
}

.big-126 {
    width: 126px;
}

.pressed {
    background-color: #b0b0b0;
    border: 1px solid #77777a;
    padding-top: 6px;
}

.stack {
    padding-left: 4px;
}

.stack-cut {
    padding-left: 3px;
}

.stack-rib {
    width: 122px;
}

.stack button {
    height: 38px;
    gap: 8px;
    white-space: nowrap;
}

.collapse {
    align-self: flex-end;
    margin: 0 11px 13px auto;
}

.collapse svg {
    width: 18px;
    height: 12px;
}

/* Workspace: the command tabs lie over the top of the graphics area */
.workspace {
    flex: 1;
    min-height: 0;
    display: grid;
    grid-template-columns: 290px 1fr;
    grid-template-rows: 33px 1fr;
}

.command-tabs {
    grid-area: 1 / 1 / 2 / 3;
    justify-self: start;
    z-index: 1;
    display: flex;
    border-bottom: 1px solid #888;
}

.command-tabs button {
    padding: 0 11px;
    border-right: 1px solid #888;
    background-color: #d4d4d4;
    color: #222;
    white-space: nowrap;
}

.command-tabs .active {
    background-color: #f7f7f7;
    color: #333;
    font-weight: bold;
}

/* Feature manager */
.manager {
    grid-area: 2 / 1 / 3 / 2;
    display: flex;
    flex-direction: column;
    min-height: 0;
    padding: 4px 2px 0 0;
    border-left: 1px solid #c6c6c6;
    border-right: 1px solid #888;
}

.dot {
    width: 10px;
    height: 10px;
    border: 1px solid #999;
    border-radius: 50%;
    background-color: #dcdcdc;
}

.grip {
    display: flex;
    align-items: center;
    justify-content: center;
    height: 26px;
    border-top: 1px solid #c6c6c6;
    border-bottom: 1px solid #c6c6c6;
}

.manager-tabs {
    display: flex;
    height: 38px;
    margin: 4px 0 0 1px;
}

.manager-tabs button {
    width: 52px;
    border: 1px solid #888;
    border-left: none;
    background-color: #d4d4d4;
}

.manager-tabs .active {
    border-bottom: none;
    background-color: #f7f7f7;
}

.manager-tabs .more {
    width: 20px;
    border: none;
    margin-left: auto;
    background: none;
}

.more svg {
    width: 12px;
    height: 18px;
}

.filter {
    display: flex;
    align-items: center;
    height: 38px;
    margin: 0 3px 0 4px;
    padding-left: 4px;
    border: 1px solid #c0c0c0;
}

.tree {
    margin: 1px 0 0;
    padding: 0;
    list-style: none;
    overflow: hidden;
}

.tree li {
    display: flex;
    align-items: center;
    height: 32px;
    gap: 6px;
    padding-left: 39px;
    white-space: nowrap;
}

.tree .root {
    padding-left: 5px;
    gap: 5px;
}

.tree .material {
    padding-left: 36px;
    gap: 5px;
}

.tree .parent {
    padding-left: 14px;
}

.tree .parent::before {
    content: "";
    border: solid transparent;
    border-width: 6px 0 6px 7px;
    border-left-color: #5a5a5e;
    margin: 0 12px 4px 0;
}

.rollback {
    flex: none;
    height: 5px;
    background-color: #3584cc;
    border-bottom: 1px solid #2a34a0;
}

.scrollbar {
    height: 26px;
    margin: auto 0 5px;
    padding: 7px 0 0 26px;
    background-color: #efefef;
    border-top: 1px solid #fff;
}

.thumb {
    display: block;
    width: 61%;
    height: 11px;
    background-color: #858585;
}

/* Graphics area */
.viewport {
    grid-area: 1 / 2 / 3 / 3;
    position: relative;
    display: flex;
    flex-direction: column;
    min-height: 0;
}

.scene {
    position: absolute;
    inset: 0;
    width: 100%;
    height: 100%;
}

.doc-buttons,
.hud,
.taskpane {
    position: relative;
    display: flex;
}

.doc-buttons {
    height: 40px;
    justify-content: flex-end;
    padding: 2px 7px 0 0;
    color: #98989c;
}

.doc-buttons button,
.hud button {
    width: 38px;
}

.hud {
    justify-content: center;
    align-items: center;
    padding-right: 6px;
    opacity: 0.8;
}

.hud .caret {
    margin: 0 4px 0 3px;
    color: #777;
}

.taskpane {
    flex-direction: column;
    align-self: flex-end;
    width: 40px;
    margin-top: 8px;
    border: 1px solid #777;
    border-bottom: none;
}

.taskpane button {
    height: 36px;
    background-color: #d4d4d4;
    border-bottom: 1px solid #777;
}

.taskpane .active {
    background-color: #f7f7f7;
}

.flyout {
    position: absolute;
    left: -1px;
    top: 46%;
    width: 14px;
    height: 60px;
    border: 1px solid #888;
    border-left: none;
    background-color: #f7f7f7;
}

.axis {
    font: 13px "Liberation Sans", sans-serif;
}

.axis-x {
    fill: #e02c20;
}

.axis-z {
    fill: #2a5fd8;
}

/* Model tabs */
.model-tabs {
    flex: none;
    display: flex;
    height: 26px;
    border-top: 1px solid #777;
    border-bottom: 1px solid #777;
}

.pager {
    display: flex;
    width: 99px;
    padding-left: 2px;
    background-color: #888;
}

.pager button {
    flex: 1;
    border: 1px solid #8a8d96;
    background-color: #a4a9b8;
}

.pager svg {
    width: 18px;
    height: 18px;
}

.tab {
    padding: 0 12px;
    background-color: #d4d4d4;
    border-right: 1px solid #777;
    font-size: 18px;
}

.model-tabs .active {
    padding: 0 12px 0 18px;
    background-color: #f7f7f7;
    font-weight: bold;
    color: #000;
}

.tab-study {
    padding: 0 28px 0 16px;
}

/* Status bar */
.status {
    flex: none;
    display: flex;
    align-items: center;
    height: 28px;
    padding: 3px 5px 0 1px;
    border-bottom: 2px solid #b0b0b0;
}

.status-mode {
    margin-left: auto;
}

.status-tag {
    width: 28px;
    height: 24px;
    margin-left: 116px;
}

/* Windows taskbar */
.taskbar {
    flex: none;
    display: grid;
    grid-template-columns: 1fr auto 1fr;
    height: 70px;
    background-color: #dadada;
}

.apps {
    grid-column: 2;
    display: flex;
    align-items: center;
}

.apps button {
    position: relative;
    width: 56px;
    height: 56px;
    margin: 0 5px;
}

.app {
    width: 36px;
    height: 36px;
}

.app-bird {
    width: 24px;
    height: 20px;
}

.apps .running::after,
.apps .current::after {
    content: "";
    position: absolute;
    bottom: 0;
    width: 9px;
    height: 5px;
    border-radius: 3px;
    background-color: #858585;
}

.apps .current {
    border-radius: 5px;
    background-color: #f0f0f0;
    box-shadow: 0 0 2px #aaa;
}

.apps .current::after {
    width: 24px;
    background-color: #1884dc;
}

.cube-letter {
    font: bold 18px "Open Sans", sans-serif;
    fill: #fff;
}

.cube-letter-w {
    font-size: 15px;
}

.cube-year {
    font: bold 10px "Open Sans", sans-serif;
    fill: #fff;
    stroke: #000;
    stroke-width: 2px;
    paint-order: stroke;
}

.badge {
    position: absolute;
    top: 2px;
    right: 1px;
    width: 24px;
    height: 24px;
    border-radius: 50%;
    background-color: #1684dc;
    color: #fff;
    font-size: 17px;
}

.badge-m {
    background-color: #2e1fa0;
    font-weight: bold;
    font-size: 15px;
    line-height: 20px;
}

.tray {
    grid-column: 3;
    display: flex;
    align-items: center;
    justify-content: flex-end;
    padding-right: 29px;
}

.tray button {
    width: 48px;
}

.tray .lang {
    width: 64px;
    line-height: 23px;
}

.tray .net {
    width: 116px;
    gap: 11px;
}

.tray .clock {
    width: 116px;
    justify-content: flex-end;
    text-align: right;
}

.tray .bell {
    width: 25px;
    margin-left: 11px;
}

/* Watermark over the bottom of the screen */
.watermark {
    position: absolute;
    left: 0;
    right: 0;
    bottom: 18px;
    display: flex;
    flex-direction: column;
    align-items: center;
    pointer-events: none;
    color: #888;
    font-weight: bold;
    opacity: 0.22;
}

.wm-ar {
    font-family: "DejaVu Sans", sans-serif;
    font-size: 66px;
    line-height: 66px;
}

.wm-en {
    font-size: 38px;
    line-height: 44px;
    opacity: 0.5;
}
```
